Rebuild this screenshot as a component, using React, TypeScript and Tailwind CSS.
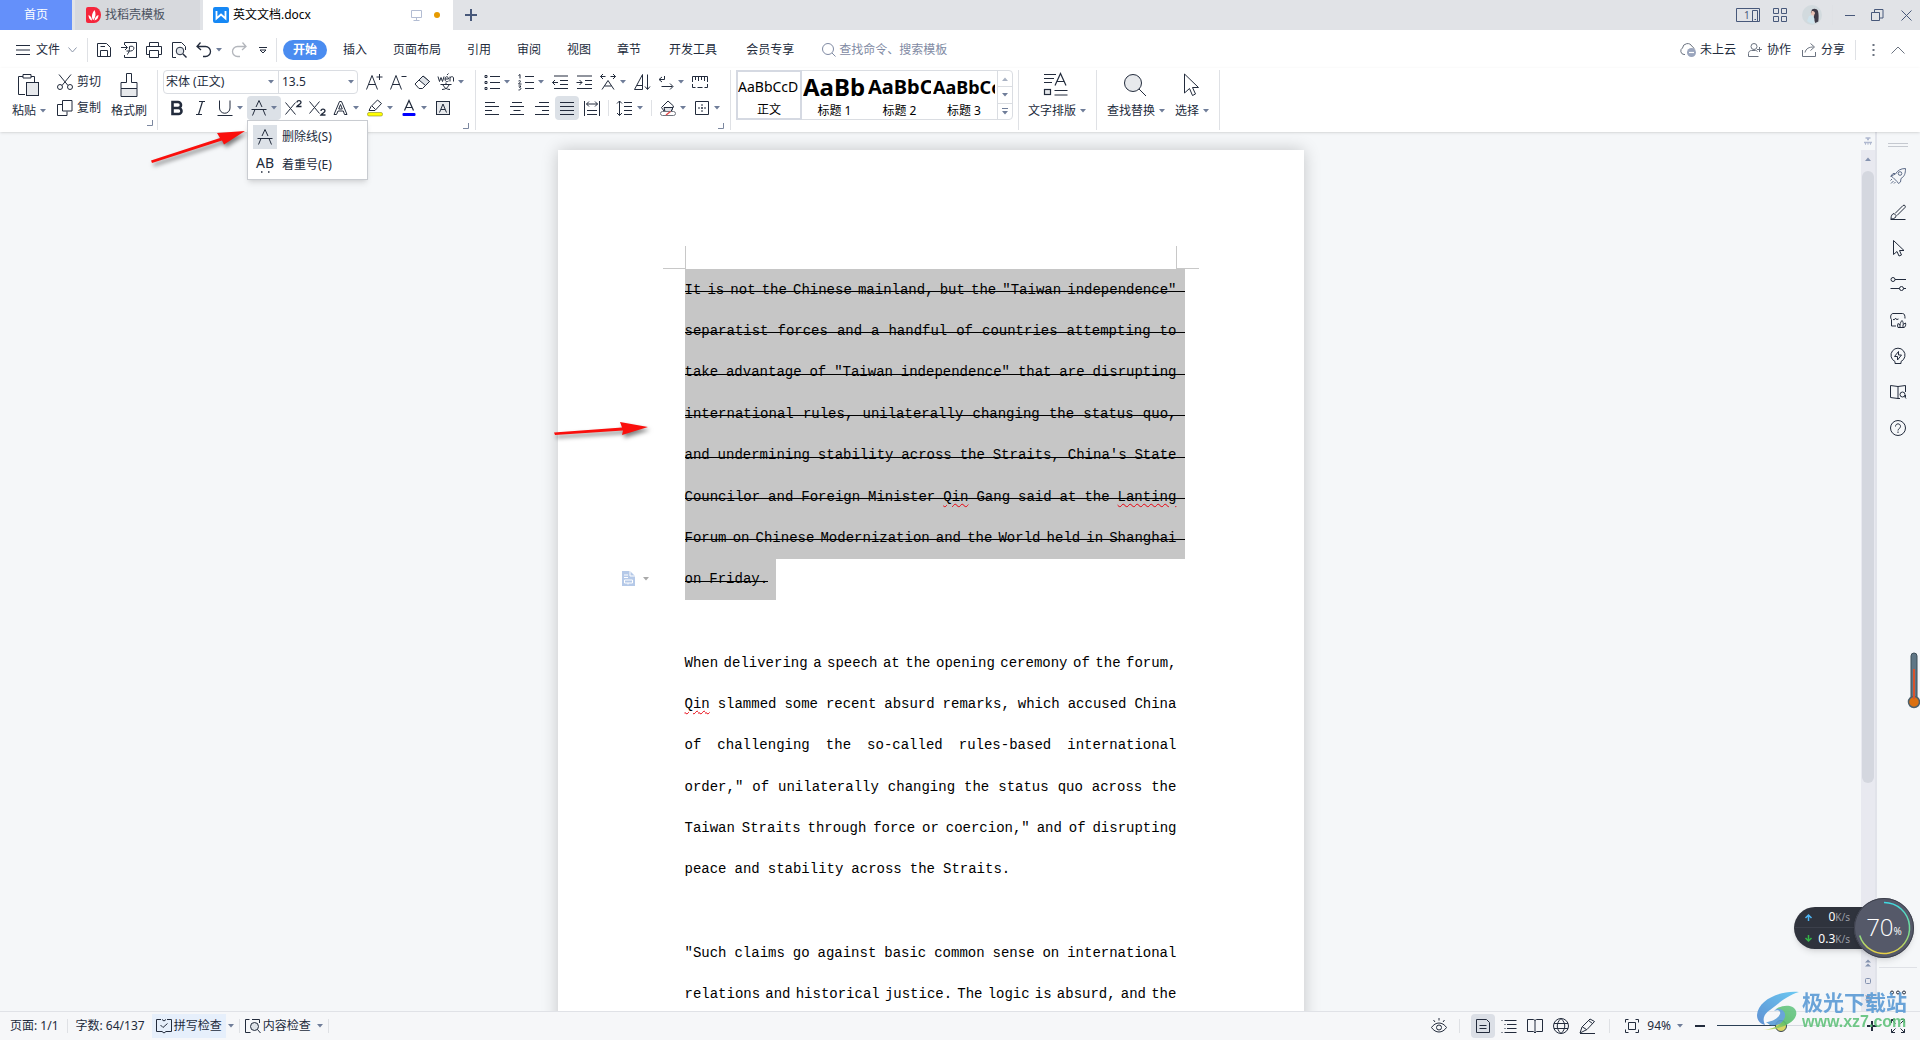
import type { ReactNode } from 'react';

const selectedLines = [
  'It is not the Chinese mainland, but the "Taiwan independence"',
  'separatist forces and a handful of countries attempting to',
  'take advantage of "Taiwan independence" that are disrupting',
  'international rules, unilaterally changing the status quo,',
  "and undermining stability across the Straits, China's State",
  'Councilor and Foreign Minister Qin Gang said at the Lanting',
  'Forum on Chinese Modernization and the World held in Shanghai',
  'on Friday.',
];

const secondLines = [
  'When delivering a speech at the opening ceremony of the forum,',
  'Qin slammed some recent absurd remarks, which accused China',
  'of challenging the so-called rules-based international',
  'order," of unilaterally changing the status quo across the',
  'Taiwan Straits through force or coercion," and of disrupting',
  'peace and stability across the Straits.',
];

const thirdLines = [
  '"Such claims go against basic common sense on international',
  'relations and historical justice. The logic is absurd, and the',
];

const misspelled = ['Qin', 'Lanting'];

const menuTabs = ['插入', '页面布局', '引用', '审阅', '视图', '章节'];
const extraTabs = ['开发工具', '会员专享'];

interface IconProps {
  children: ReactNode;
  w?: number;
  h?: number;
  className?: string;
}

function Icon({ children, w = 16, h = 16, className = '' }: IconProps) {
  return (
    <svg
      width={w}
      height={h}
      viewBox={`0 0 ${w} ${h}`}
      fill="none"
      stroke="currentColor"
      className={`shrink-0 overflow-visible ${className}`}
      aria-hidden="true"
    >
      {children}
    </svg>
  );
}

function Caret({ className = 'text-[#6f7d99]' }: { className?: string }) {
  return (
    <svg width="6" height="4" viewBox="0 0 6 4" className={`shrink-0 ${className}`} aria-hidden="true">
      <path d="M0 0h6L3 3.5z" fill="currentColor" />
    </svg>
  );
}

interface ToolProps {
  label: string;
  children: ReactNode;
  caret?: boolean;
  active?: boolean;
}

function Tool({ label, children, caret, active }: ToolProps) {
  return (
    <button
      type="button"
      aria-label={label}
      className={`flex h-6 shrink-0 items-center rounded-sm ${caret ? 'w-[34px] gap-1 pl-1' : 'w-6 justify-center'} ${active ? 'bg-[#dce1e7]' : ''}`}
    >
      {children}
      {caret && <Caret />}
    </button>
  );
}

function Divider({ className = 'h-6' }: { className?: string }) {
  return <div className={`w-px shrink-0 bg-[#dfe1e5] ${className}`} />;
}

function Launcher() {
  return (
    <button type="button" aria-label="更多设置" className="ml-auto flex text-[#7b879f]">
      <Icon w={6} h={6}><path d="M5.500 0v5.500H0" /></Icon>
    </button>
  );
}

function StrikeGlyph() {
  return (
    <Icon>
      <path d="M0.500 9.500h15M5 7l3-6.500L11 7M3.800 10l-2.300 5.500M12.200 10l2.300 5.500" />
    </Icon>
  );
}

function TitleBar() {
  return (
    <div className="flex h-[30px] shrink-0 items-center bg-[#e1e3e7] text-[#47587a]">
      <button type="button" className="h-full w-[72px] bg-[#6490fa] text-white">首页</button>
      <button type="button" className="ml-[3px] flex h-full w-[125px] items-center gap-1 bg-[#d7d9dd] pl-[11px] text-[#4a5160]">
        <svg width="15" height="16" viewBox="0 0 15 16" aria-hidden="true">
          <path d="M2 0h6a7 8 0 0 1 0 16H2a2 2 0 0 1-2-2V2a2 2 0 0 1 2-2z" fill="#f5263c" />
          <path d="M7 13C5 10 6 6 8.500 3c1.500 3 1.500 7-1 10z" fill="#fff" />
          <path d="M6 13.500C3.500 13 2.500 10.500 2.500 8c2.500 1 3.500 3 3.500 5.500zM8.500 13.500C9 10.500 10 9 12.500 8c0 3-1.500 5-4 5.500z" fill="#fff" />
        </svg>
        找稻壳模板
      </button>
      <div className="ml-[3px] flex h-full w-[250px] items-center bg-white pl-2.5 text-black">
        <svg width="16" height="16" viewBox="0 0 16 16" className="mr-1" aria-hidden="true">
          <rect width="16" height="16" rx="2" fill="#1688f5" />
          <path d="M3.500 4v7.500L8 7.500l4.500 4V4" stroke="#fff" strokeWidth="1.800" fill="none" />
        </svg>
        英文文档.docx
        <Icon w={11} h={11} className="ml-auto text-[#b3bdd3]">
          <path d="M0.500 0.500h10v7h-10zM5.500 7.500v3M2.500 10.500h6" />
        </Icon>
        <span className="mr-[13px] ml-3 size-1.5 rounded-full bg-[#e69a00]" />
      </div>
      <button type="button" aria-label="新建标签" className="ml-3">
        <Icon w={12} h={12}><path d="M6 0v12M0 6h12" strokeWidth="2" /></Icon>
      </button>
      <div className="mr-2 ml-auto flex items-center">
        <button type="button" aria-label="窗口布局" className="relative mr-[13px] flex">
          <Icon w={24} h={14}>
            <path d="M0.500 0.500h23v13h-23zM16.500 2.500h5v11h-5zM18.500 11.500h1.500" />
          </Icon>
          <span className="absolute top-0 left-2 text-[10px] leading-[14px] text-[#47587a]">1</span>
        </button>
        <button type="button" aria-label="应用" className="mr-[15px] flex">
          <Icon w={14} h={14}>
            <path d="M0.500 0.500h5v5h-5zM8.500 0.500h5v5h-5zM0.500 8.500h5v5h-5zM8.500 8.500h5v5h-5z" />
          </Icon>
        </button>
        <svg width="20" height="20" viewBox="0 0 20 20" aria-hidden="true">
          <circle cx="10" cy="10" r="10" fill="#d2dade" />
          <path d="M10 4.500c2-1.500 5-1 6 1.500.8 3 .8 7 .3 10.500l-3 1.500-2-5 1-3-3.500-2z" fill="#3d3a47" />
          <path d="M9.500 6.500c1.500-1 3.500 0 3.500 2l-1.500 2.500-2.500-1.500z" fill="#e9c4b7" />
          <path d="M7 11l4-.5 1.500 3.500-.5 4.500c-2.500 0-5-.5-7-2.500z" fill="#cfe3ec" />
        </svg>
        <Divider className="mr-2 ml-2.5 h-5 bg-[#c3c7ce]" />
        <button type="button" aria-label="最小化" className="mr-4 ml-1 flex"><Icon w={10} h={12}><path d="M0 6.500h10" /></Icon></button>
        <button type="button" aria-label="还原" className="mr-[17px] flex">
          <Icon w={13} h={12}><path d="M0.500 3.500h8v8h-8zM3.500 3.500v-3h8.500v8.500H8.500" /></Icon>
        </button>
        <button type="button" aria-label="关闭" className="flex"><Icon w={11} h={11}><path d="M0.500 0.500l10 10M10.500 0.500l-10 10" /></Icon></button>
      </div>
    </div>
  );
}

function MenuBar() {
  return (
    <div className="flex h-[38px] shrink-0 items-center bg-white pt-0.5">
      <button type="button" className="ml-4 flex items-center">
        <Icon w={14} h={10}><path d="M0 0.500h14M0 5h14M0 9.500h14" /></Icon>
        <span className="mr-2 ml-1.5">文件</span>
        <Icon w={9} h={6} className="text-[#8e98ab]"><path d="M0.500 0.500l4 4.500 4-4.500" /></Icon>
      </button>
      <Divider className="mr-2 ml-2.5 h-6" />
      <div className="flex items-center gap-[9px]">
        <button type="button" aria-label="保存"><Icon><path d="M1.500 1.500h9l4 4v9h-13zM4.500 14.500v-6h7v6M4.500 4.500h4.500" /></Icon></button>
        <button type="button" aria-label="输出为PDF"><Icon><path d="M3.500 3V0.500h12v15h-12V13M0 5.500h6M4 3l2.500 2.500L4 8M6 12.500c2-1 2.500-4 2.500-8 4-1 5 1 4 3s-4 1.500-7 1.500" /></Icon></button>
        <button type="button" aria-label="打印"><Icon><path d="M3.500 5V0.500h9V5M3.500 12.500h-3v-8h15v8h-3M3.500 8.500h9v7h-9z" /></Icon></button>
        <button type="button" aria-label="打印预览">
          <Icon><path d="M5 15.500H1.500v-15h9l4 4V8" /><circle cx="9" cy="9" r="3.800" fill="#e1e5ea" /><path d="M12 12l3.500 3.500" strokeWidth="1.400" /></Icon>
        </button>
        <button type="button" aria-label="撤销" className="flex items-center gap-1">
          <Icon><path d="M4.500 0.500l-3.500 4 4 3.500M1.500 4.500h8a4.500 4.500 0 0 1 0 10H7" strokeWidth="1.300" /></Icon>
          <Caret />
        </button>
        <button type="button" aria-label="恢复" className="text-[#b3b6bc]"><Icon><path d="M11.500 0.500l3.500 4-4 3.500M14.500 4.500h-8a4.500 4.500 0 0 0 0 10H9" strokeWidth="1.300" /></Icon></button>
      </div>
      <button type="button" aria-label="自定义快速访问" className="ml-3"><Icon w={8} h={7}><path d="M0 0.500h8M1 3l3 3 3-3z" /></Icon></button>
      <Divider className="mr-1.5 ml-[9px] h-6" />
      <nav className="flex items-center">
        <button type="button" className="h-5 w-11 rounded-full bg-[#4a8cf0] font-bold text-white">开始</button>
        <div className="ml-4 flex gap-[26px]">
          {menuTabs.map((tab) => (
            <button type="button" key={tab}>{tab}</button>
          ))}
        </div>
        <div className="ml-7 flex gap-[29px]">
          {extraTabs.map((tab) => (
            <button type="button" key={tab}>{tab}</button>
          ))}
        </div>
      </nav>
      <label className="ml-7 flex items-center gap-[3px] text-[#7f8aa3]">
        <Icon w={14} h={14}><circle cx="6" cy="6" r="5.500" /><path d="M10 10l3.500 3.500" /></Icon>
        <input type="text" placeholder="查找命令、搜索模板" aria-label="查找命令" className="w-32 bg-transparent placeholder:text-[#7f8aa3]" />
      </label>
      <div className="mr-[15px] ml-auto flex items-center">
        <button type="button" className="flex items-center gap-1">
          <Icon className="text-[#6b7380]">
            <path d="M5 12.500H4A3.500 3.500 0 0 1 2.500 6a5 5 0 0 1 9.500-1.500c1.500.5 2 1.500 2 2.500" />
            <circle cx="11.500" cy="10.500" r="4.500" fill="#9aa5bd" stroke="none" />
            <path d="M9 10.500h5" stroke="#fff" strokeWidth="1.200" />
          </Icon>
          未上云
        </button>
        <button type="button" className="ml-3 flex items-center gap-[5px]">
          <Icon w={14} h={14} className="text-[#6b7380]"><circle cx="6" cy="3.500" r="3" /><path d="M10.500 13.500h-10v-3c0-2 1.500-3 3-3h4c1 0 1.500.5 2 1M11.500 4v5M9 6.500h5" /></Icon>
          协作
        </button>
        <button type="button" className="ml-[11px] flex items-center gap-[5px]">
          <Icon w={14} h={14} className="text-[#6b7380]"><path d="M0.500 7v6.500h13V9M3 9.500C4 5.500 7 4 11.500 4M8.500 0.500L12.500 4 8.500 7.500" /></Icon>
          分享
        </button>
        <Divider className="mr-4 ml-2.5 h-5" />
        <button type="button" aria-label="更多" className="mr-4"><Icon w={3} h={12} className="text-[#6b7380]"><path d="M0.500 1h2M0.500 6h2M0.500 11h2" strokeWidth="2" /></Icon></button>
        <button type="button" aria-label="折叠功能区"><Icon w={14} h={8} className="text-[#6b7380]"><path d="M0.500 7.500L7 1l6.500 6.500" /></Icon></button>
      </div>
    </div>
  );
}

function StrikeMenu() {
  return (
    <div className="absolute top-6 left-0 z-20 flex h-[60px] w-[121px] flex-col gap-1 border border-[#c9ccd1] bg-white px-[3px] py-1 shadow-md">
      <button type="button" className="flex items-center gap-[5px] pl-0.5">
        <span className="flex size-6 items-center justify-center bg-[#dce1e7]"><StrikeGlyph /></span>
        删除线(S)
      </button>
      <button type="button" className="flex items-center gap-[5px] pl-0.5">
        <span className="flex size-6 flex-col items-center justify-center">
          <span className="text-sm leading-3">AB</span>
          <Icon w={12} h={4}><path d="M2 3h1.500M9 3h1.500" strokeWidth="1.500" /></Icon>
        </span>
        着重号(E)
      </button>
    </div>
  );
}

function FontGroup() {
  return (
    <div className="flex w-[317px] shrink-0 flex-col gap-0.5 pr-1.5 pl-[5px]">
      <div className="flex h-6 items-center">
        <div className="flex h-6 rounded-sm border border-[#dadde2]">
          <label className="flex w-[115px] items-center border-r border-[#dadde2] pr-1">
            <select aria-label="字体" className="min-w-0 flex-1 appearance-none bg-transparent pl-0.5">
              <option>宋体 (正文)</option>
            </select>
            <Caret />
          </label>
          <label className="flex w-[78px] items-center pr-[3px]">
            <select aria-label="字号" className="min-w-0 flex-1 appearance-none bg-transparent pl-[3px]">
              <option>13.5</option>
            </select>
            <Caret />
          </label>
        </div>
        <div className="ml-1 flex">
          <Tool label="增大字号"><Icon><path d="M0.500 15.500l5.500-14 5.500 14M2.500 10.500h7M13.500 0v6M10.500 3h6" /></Icon></Tool>
          <Tool label="减小字号"><Icon><path d="M0.500 15.500l5.500-14 5.500 14M2.500 10.500h7M11.500 2.500h5" /></Icon></Tool>
          <Tool label="清除格式"><Icon><path d="M1 10l8-8 6.500 5.500-7 7H5z" /><path d="M5 6L9 2l6.500 5.500-4 4z" fill="#dfe3e8" /></Icon></Tool>
          <Tool label="拼音指南" caret>
            <Icon>
              <path d="M0 2.500l1.500 5 1.500-4 1.500 4 1.500-5M7 5h3.500c0-3-3.500-3-3.500 0s2.500 3 3.500 2M12 7.500v-5M12 4c1-2 3.500-1.500 3.500 0v3.500M9 1l1.500-1.500M2.500 10.500h11M8 8.500v2M5 11c1 2.500 3.500 4.500 7 4.500M11 11c-1 2.500-3.500 4.500-7 4.500" />
            </Icon>
          </Tool>
        </div>
      </div>
      <div className="flex h-6 items-center pl-0.5">
        <Tool label="加粗"><Icon><path d="M3.500 2h5.500a3 3 0 0 1 0 6H3.500zM3.500 8h6a3 3 0 0 1 0 6h-6z" strokeWidth="2.600" /></Icon></Tool>
        <Tool label="倾斜"><Icon><path d="M6 1.500h6M3 14.500h6M9.500 1.500l-4 13" strokeWidth="1.200" /></Icon></Tool>
        <Tool label="下划线" caret><Icon><path d="M2.500 0.500v7.500a5 5 0 0 0 10.500 0V0.500M0.500 15.500h15" /></Icon></Tool>
        <div className="relative">
          <Tool label="删除线" caret active><StrikeGlyph /></Tool>
          <StrikeMenu />
        </div>
        <Tool label="上标"><Icon><path d="M0.500 2.500l10 12M10.500 2.500l-10 12" /><path d="M12 2.500c0-2.500 4-2.500 4 0 0 1.500-2.500 2-4 4h4.500" strokeWidth="1.300" /></Icon></Tool>
        <Tool label="下标"><Icon><path d="M0.500 1.500l10 12M10.500 1.500l-10 12" /><path d="M12 11c0-2.500 4-2.500 4 0 0 1.500-2.500 2-4 4h4.500" strokeWidth="1.300" /></Icon></Tool>
        <Tool label="文字效果" caret><Icon><path d="M1 14.500L6.500 1.500h2l5.500 13h-2.500l-1.200-3.500H5l-1.500 3.500zM5.700 9h3.600L7.500 4.500z" /></Icon></Tool>
        <Tool label="突出显示" caret>
          <Icon><path d="M2 10.500l2-4L10.500 0l4 3.500L8 10.500zM5 6l3.500 3.500" /><rect x="0.500" y="12.500" width="15" height="3.500" rx="1.500" fill="#ffff00" stroke="#8c8c2a" strokeWidth="0.600" /></Icon>
        </Tool>
        <Tool label="字体颜色" caret>
          <Icon><path d="M3.500 10.500L8 0.500l4.500 10M5 7.500h6" strokeWidth="1.200" /><rect x="1.500" y="13" width="13" height="3" rx="1" fill="#0000ff" stroke="none" /></Icon>
        </Tool>
        <Tool label="字符底纹"><Icon><rect x="1.500" y="1.500" width="13" height="13" fill="#e7e9ec" /><path d="M4.500 12.500L8 4l3.500 8.500M6 9.500h4" /></Icon></Tool>
      </div>
      <div className="flex pt-px"><Launcher /></div>
    </div>
  );
}

function ParagraphGroup() {
  return (
    <div className="flex w-[254px] shrink-0 flex-col gap-0.5 pr-1.5 pl-1">
      <div className="flex h-6 items-center">
        <Tool label="项目符号" caret><Icon><path d="M6 2.500h10M6 8.500h10M6 14.500h10" strokeWidth="1.200" /><path d="M1 1.500h2v2H1zM1 7.500h2v2H1zM1 13.500h2v2H1z" /></Icon></Tool>
        <Tool label="编号" caret><Icon><path d="M7 2.500h9M7 8.500h9M7 14.500h9" strokeWidth="1.200" /><path d="M0.500 1.500l1.500-1v4M0.500 7c2-1 3 0 0 3h3M0.500 12h2.500l-1.500 1.500c2 0 2 2.500-1 2.500" /></Icon></Tool>
        <Tool label="减少缩进"><Icon><path d="M2 2h14M8 6.500h8M8 10.500h8M2 14.500h14" strokeWidth="1.200" /><path d="M0.500 8.500H6M3 6L0.500 8.500 3 11" /></Icon></Tool>
        <Tool label="增加缩进"><Icon><path d="M1 2h15M9 6.500h7M9 10.500h7M1 14.500h15" strokeWidth="1.200" /><path d="M0.500 8.500H6M3.500 6L6 8.500 3.500 11" /></Icon></Tool>
        <Tool label="中文版式" caret><Icon><path d="M0.500 2.500h5M3 0L0.500 2.500 3 5M15.500 2.500h-5M13 0l2.500 2.500L13 5M2 15.500l6-9 6 9M4.500 12h7" /></Icon></Tool>
        <Tool label="排序"><Icon><path d="M0.500 15.500h8V0.500zM3 11.500h5.500M13.500 0.500v14.500M11 12.500l2.500 3 2.500-3" /></Icon></Tool>
        <Tool label="显示编辑标记" caret><Icon><path d="M1.500 5.500h5V2M4 3l-3 2.500L4 8M3.500 12.500h11M12 9.500l3 3-3 3" /></Icon></Tool>
        <Tool label="制表位"><Icon><path d="M0.500 8V2.500h15V8M3.500 2.500V6M6.500 2.500V7M9.500 2.500V6M12.500 2.500V7M0.500 10v3.500h3M15.500 10v3.500h-3M5.500 13.500h5" /></Icon></Tool>
      </div>
      <div className="flex h-6 items-center">
        <div className="flex gap-px">
          <Tool label="左对齐"><Icon><path d="M1 2.500h10M1 6.500h14M1 10.500h7M1 14.500h14" strokeWidth="1.200" /></Icon></Tool>
          <Tool label="居中对齐"><Icon><path d="M3 2.500h10M1 6.500h14M4.500 10.500h7M1 14.500h14" strokeWidth="1.200" /></Icon></Tool>
          <Tool label="右对齐"><Icon><path d="M5 2.500h10M1 6.500h14M8 10.500h7M1 14.500h14" strokeWidth="1.200" /></Icon></Tool>
          <Tool label="两端对齐" active><Icon><path d="M1 2.500h14M1 6.500h14M1 10.500h14M1 14.500h14" strokeWidth="1.200" /></Icon></Tool>
          <Tool label="分散对齐"><Icon><path d="M0.500 1v15M15.500 1v15M2.500 4h11M5 1.500L2.500 4 5 6.500M11 1.500L13.500 4 11 6.500M3 10.500h10M3 14.500h10" /></Icon></Tool>
        </div>
        <Divider className="mx-1 h-4" />
        <Tool label="行距" caret><Icon><path d="M2.500 1v14.500M0 3.500L2.500 1 5 3.500M0 13l2.500 2.500L5 13M7 2.500h8M7 6.500h8M7 10.500h8M7 14.500h8" /></Icon></Tool>
        <Divider className="mx-1 h-4" />
        <Tool label="底纹颜色" caret><Icon><path d="M1.500 7.500L8 1l5.500 5-2 5H4z" /><path d="M4 7.500h9l-2 4H5z" fill="#dfe3e8" /><rect x="0.500" y="11.500" width="15" height="4" rx="2" fill="#fff" stroke="#70757f" /><path d="M6 15l4.500-3.500" stroke="#e34c4c" strokeWidth="1.500" /></Icon></Tool>
        <Tool label="边框" caret><Icon><path d="M1.500 1.500h13v13h-13z" /><path d="M8 4v8M4 8h8" strokeDasharray="2 1" /></Icon></Tool>
      </div>
      <div className="flex pt-px"><Launcher /></div>
    </div>
  );
}

function StyleGallery() {
  return (
    <div className="ml-[5px] flex h-[50px] w-[277px] shrink-0 rounded-sm border border-[#dadde2] text-black">
      <button type="button" className="-m-px flex w-[66px] flex-col items-center border-2 border-[#d5d9e2]">
        <span className="flex h-8 w-full items-center overflow-hidden text-sm whitespace-nowrap">AaBbCcD</span>
        <span className="leading-4">正文</span>
      </button>
      <button type="button" className="ml-0.5 flex w-[63px] flex-col items-center">
        <span className="flex h-8 w-full items-center overflow-hidden text-2xl font-bold whitespace-nowrap">AaBb</span>
        <span className="leading-4">标题 1</span>
      </button>
      <button type="button" className="ml-0.5 flex w-[63px] flex-col items-center">
        <span className="flex h-8 w-full items-center overflow-hidden text-xl font-bold whitespace-nowrap">AaBbC</span>
        <span className="leading-4">标题 2</span>
      </button>
      <button type="button" className="ml-0.5 flex w-[62px] flex-col items-center">
        <span className="flex h-8 w-full items-center overflow-hidden text-lg font-bold whitespace-nowrap">AaBbCc</span>
        <span className="leading-4">标题 3</span>
      </button>
      <div className="ml-auto flex w-[15px] flex-col divide-y divide-[#dadde2] border-l border-[#dadde2]">
        <button type="button" aria-label="上一行" className="flex flex-1 items-center justify-center"><Caret className="rotate-180 text-[#a9b2c3]" /></button>
        <button type="button" aria-label="下一行" className="flex flex-1 items-center justify-center"><Caret /></button>
        <button type="button" aria-label="更多样式" className="flex flex-1 flex-col items-center justify-center gap-0.5">
          <span className="h-px w-1.5 bg-[#6f7d99]" />
          <Caret />
        </button>
      </div>
    </div>
  );
}

function BigButton({ label, children, className = '' }: { label: string; children: ReactNode; className?: string }) {
  return (
    <button type="button" className={`flex shrink-0 flex-col items-center ${className}`}>
      <span className="mt-[3px] flex h-6 items-center pr-[3px]">{children}</span>
      <span className="mt-1 flex items-center gap-1 leading-5">{label}<Caret /></span>
    </button>
  );
}

function Ribbon() {
  return (
    <div className="relative z-10 flex h-16 shrink-0 bg-white pt-0.5 shadow-sm">
      <div className="flex w-[157px] shrink-0">
        <BigButton label="粘贴" className="ml-3">
          <Icon w={22} h={24}><path d="M6 3.500H1.500v18H8M14 3.500h3.500V9M6 1.500h8v3.500H6z" /><rect x="9.500" y="9.500" width="12" height="13" fill="#e7e9ec" /></Icon>
        </BigButton>
        <div className="ml-[11px] flex flex-col gap-0.5">
          <button type="button" className="flex h-6 items-center gap-1">
            <Icon><path d="M2 0.500l9 11M14 0.500L5 11.500" /><circle cx="3" cy="13" r="2.500" /><circle cx="13" cy="13" r="2.500" /></Icon>
            剪切
          </button>
          <button type="button" className="flex h-6 items-center gap-1">
            <Icon><path d="M5.500 0.500h9.500v10.500H5.500zM5 4.500H0.500v11H10v-4" /></Icon>
            复制
          </button>
        </div>
        <button type="button" className="ml-2.5 flex flex-col items-center">
          <span className="mt-[3px] flex h-6 items-center"><Icon w={18} h={24}><path d="M6.500 0.500h5v9h5.500v6H1v-6h5.500z" /><path d="M1 15.500h16v8H1z" fill="#e7e9ec" /></Icon></span>
          <span className="mt-1 leading-5">格式刷</span>
        </button>
        <div className="flex flex-1 items-end pr-[5px] pb-1.5"><Launcher /></div>
      </div>
      <Divider className="h-[60px]" />
      <FontGroup />
      <Divider className="h-[60px]" />
      <ParagraphGroup />
      <Divider className="h-[60px]" />
      <StyleGallery />
      <Divider className="ml-[5px] h-[60px]" />
      <BigButton label="文字排版" className="ml-[9px]">
        <Icon w={24} h={24}><path d="M0 1.500h12M0 5.500h10M0 9.500h8M11 12.500L16.500 0.500 22 12.500M13 8.500h7M10.500 17.500h13M10.500 22h13" strokeWidth="1.200" /><rect x="0.500" y="16.500" width="6" height="5" fill="#e7e9ec" strokeWidth="1.200" /></Icon>
      </BigButton>
      <Divider className="ml-2.5 h-[60px]" />
      <BigButton label="查找替换" className="ml-2.5">
        <Icon w={22} h={24}><circle cx="9" cy="10" r="8.500" fill="#e7e9ec" /><path d="M15 16l7 7" /></Icon>
      </BigButton>
      <BigButton label="选择" className="ml-2.5">
        <Icon w={16} h={24}><path d="M1.500 1v19l5-4.500 3 7 3-1.500-3-6.500h6z" /></Icon>
      </BigButton>
      <Divider className="ml-2.5 h-[60px]" />
    </div>
  );
}

function Line({ text, struck, last }: { text: string; struck?: boolean; last?: boolean }) {
  return (
    <p
      className={`flex items-center ${last ? 'gap-2' : 'justify-between'} ${
        struck
          ? `relative bg-[#c6c6c6] pr-2 after:absolute after:left-0 after:top-[22px] after:h-px after:bg-black ${last ? 'w-max after:right-2' : '-mr-2 after:right-0'}`
          : ''
      }`}
    >
      {text.split(' ').map((word, i) => (
        <span
          key={i}
          className={misspelled.includes(word) ? 'underline decoration-red-600 decoration-wavy decoration-1 underline-offset-2' : ''}
        >
          {word}
        </span>
      ))}
    </p>
  );
}

function DocumentPage() {
  return (
    <div className="mx-auto mt-[18px] h-[1055px] w-[746px] bg-white px-[127px] pt-24 font-[Liberation_Mono,monospace] text-sm text-black shadow-[0_0_16px_rgba(0,0,0,0.2)]">
      <div className="-mx-[22px] flex h-[23px] justify-between">
        <div className="w-[23px] border-r border-b border-[#c8c8c8]" />
        <div className="w-[23px] border-b border-l border-[#c8c8c8]" />
      </div>
      <div className="relative grid h-[331px] grid-rows-8">
        {selectedLines.map((text, i) => (
          <Line key={text} text={text} struck last={i === 7} />
        ))}
        <button type="button" aria-label="段落布局" className="absolute bottom-3.5 -left-[63px] flex items-center gap-2">
          <svg width="13" height="15" viewBox="0 0 13 15" aria-hidden="true">
            <path d="M0 0h8l5 5v10H0z" fill="#b5c9e8" />
            <path d="M8 0v5h5M2 4h4M2 6.500h4M2.500 9h8v3h-8zM6 12v1.500" stroke="#fff" fill="none" />
          </svg>
          <Caret className="text-[#a9a9a9]" />
        </button>
      </div>
      <div className="mt-[42px] grid h-[248px] grid-rows-6">
        {secondLines.map((text, i) => (
          <Line key={text} text={text} last={i === 5} />
        ))}
      </div>
      <div className="mt-[42px] grid h-[83px] grid-rows-2">
        {thirdLines.map((text) => (
          <Line key={text} text={text} />
        ))}
      </div>
    </div>
  );
}

function ScrollBar() {
  return (
    <div className="flex w-4 shrink-0 flex-col items-center border-r-2 border-[#e1e3ea] text-[#8593b0]">
      <Icon w={8} h={8} className="my-[5px] text-[#b0b9d0]"><path d="M1.500 1h5M3 2.500h2M0 5.500h8M1 7h1M3.500 7h1M6 7h1" strokeWidth="1.500" /></Icon>
      <div className="flex w-full flex-1 flex-col items-center bg-[#e8e9f0] pt-[7px]">
        <Caret className="rotate-180" />
        <div className="mt-2.5 h-[612px] w-3 rounded-full bg-[#d4d7df]" />
        <div className="mt-auto mb-2 flex flex-col items-center gap-[11px]">
          <Icon w={6} h={8}><path d="M0 3.500h6L3 0.500zM0 7.500h6L3 4.500z" fill="currentColor" stroke="none" /></Icon>
          <Icon w={6} h={6}><rect x="0.500" y="0.500" width="5" height="5" rx="1" /></Icon>
          <Icon w={6} h={8}><path d="M0 0.500h6L3 3.500zM0 4.500h6L3 7.500z" fill="currentColor" stroke="none" /></Icon>
        </div>
      </div>
    </div>
  );
}

function SideBar() {
  return (
    <aside className="flex w-[43px] shrink-0 flex-col items-center pr-0.5">
      <div className="mt-[11px] h-1 w-5 border-y border-[#c5c9d0]" />
      <div className="mt-[21px] flex flex-col gap-5">
        <button type="button" aria-label="快捷" className="text-[#5d6b88]">
          <Icon><path d="M15.500 0.500c-5 0-8 2-10 5.500L1 8l2 1.500 4 4L8.500 15.500 10.500 14l.5-3.500c3.500-2 4.500-5 4.500-10zM5 5.500H3L0.500 8.500M1 15.500l2.500-2.500M0.500 12.500L2 11M4 15.500L5.500 14" /><circle cx="10" cy="5.500" r="1.800" /></Icon>
        </button>
        <button type="button" aria-label="样式"><Icon><path d="M0.500 15.500h15M1 15c0-3.500 1-5 3-5.500l2 2c0 2-1.500 3.500-5 3.500zM5 9.500L13 1.500c1.500-1 3 .5 2 2L7 11.500" /></Icon></button>
        <button type="button" aria-label="选择窗格"><Icon><path d="M3.500 0.500v14l3.500-3 2 4.500 2.500-1-2-4.500H14z" /></Icon></button>
        <button type="button" aria-label="属性"><Icon><circle cx="3" cy="3.500" r="2" /><path d="M5 3.500h11M0.500 12.500h9M13.500 12.500H16" /><circle cx="11.500" cy="12.500" r="2" /></Icon></button>
        <button type="button" aria-label="资源"><Icon><path d="M1.500 7.500v6.500H6M1.500 7.500C0 6 .5 1.500 3 1.500h9.500c2 0 2.500 2 2.500 5M3 7.500c2 1 2.500-1.500 2.500-1.500s.5 2.500 3 1" /><path d="M8 15.500c-1-2 0-4 0-4l2 1.500c0-2 1.500-4 2-4.500 1 1 1.500 3 1 4l2.500-1.500c.5 2 0 4-1.500 4.500zM10 13v2.500M13 13v2.500" /></Icon></button>
        <button type="button" aria-label="推荐"><Icon><path d="M5 13.500A7 7 0 1 1 11 13.500v2H5zM8.500 3.500L4.500 8.500h3v3.500l4-5h-3z" /></Icon></button>
        <button type="button" aria-label="词典"><Icon><path d="M8 2.500L0.500 1.500v12l7.500 1V2.500l7.500-1V8M8 14.500h2M15.500 13v-2" /><circle cx="12.500" cy="10.500" r="2.500" /><path d="M14.500 12.500l1.500 2" /></Icon></button>
        <button type="button" aria-label="帮助"><Icon><circle cx="8" cy="8" r="7.500" /><path d="M5.500 6.500c0-3.500 5-3.500 5 0 0 2-2.500 2-2.500 4M8 11.500v1.500" /></Icon></button>
      </div>
      <div className="mt-auto h-px w-[38px] bg-[#dfe1e6]" />
      <button type="button" aria-label="更多工具" className="mt-[22px] mb-4"><Icon w={16} h={5}><circle cx="2" cy="2.500" r="1.500" /><circle cx="8" cy="2.500" r="1.500" /><circle cx="14" cy="2.500" r="1.500" /></Icon></button>
    </aside>
  );
}

function StatusBar() {
  return (
    <footer className="flex h-[29px] shrink-0 items-center border-t border-[#e0e2e7] bg-[#f6f7f9] pb-px">
      <button type="button" className="ml-2.5">页面: 1/1</button>
      <Divider className="mx-2 h-3.5" />
      <button type="button">字数: 64/137</button>
      <button type="button" className="ml-[7px] flex h-6 items-center gap-0.5 bg-[#e6effb] px-1">
        <Icon><path d="M5 1.500H0.500v12H6l2 1.500 2-1.500h5.500v-12H11M6 1.500l2 1.500 2-1.500M4.500 7l2.500 2.500L11.500 5.500" /></Icon>
        拼写检查
      </button>
      <button type="button" aria-label="拼写检查选项" className="ml-0.5"><Caret /></button>
      <Divider className="mx-[5px] h-3.5" />
      <button type="button" className="flex items-center gap-0.5">
        <Icon><path d="M4.500 1.500h-4v13h5M7 1.500h7.500V5" /><circle cx="9.500" cy="8.500" r="4" fill="#dfe3e8" /><path d="M12.500 11.500l3 3.500" /></Icon>
        内容检查
        <span className="ml-1"><Caret /></span>
      </button>
      <Divider className="ml-[5px] h-3.5" />
      <div className="mr-[15px] ml-auto flex items-center">
        <button type="button" aria-label="护眼模式"><Icon><path d="M0.500 9.500c4-6 11-6 15 0-4 6-11 6-15 0zM8 0v2.500M2.500 2L4 4M13.500 2L12 4" /><circle cx="8" cy="9.500" r="2.500" /></Icon></button>
        <Divider className="mr-[11px] ml-3 h-3.5" />
        <button type="button" aria-label="页面视图" className="flex h-6 w-6 items-center justify-center rounded-sm bg-[#dbdfe6]"><Icon w={14} h={14}><path d="M0.500 0.500h10l3 3v10h-13zM3.500 6.500h7M3.500 9.500h7" /></Icon></button>
        <div className="ml-1.5 flex items-center gap-2.5">
          <button type="button" aria-label="大纲"><Icon><path d="M0.500 2.500h1M3.500 2.500h12M3.500 6.500h1M6 6.500h9.500M3.500 10.500h1M6 10.500h9.500M0.500 14.500h1M3.500 14.500h12" /></Icon></button>
          <button type="button" aria-label="阅读版式"><Icon><path d="M8 2.500v12M0.500 1.500H6.500L8 2.500 9.500 1.500h6v12h-6L8 15l-1.500-1.500h-6z" /></Icon></button>
          <button type="button" aria-label="Web版式"><Icon><circle cx="8" cy="8" r="7.500" /><path d="M1 5.500h14M1 10.500h14M8 0.500C3 5 3 11 8 15.500M8 0.500c5 4.500 5 10.500 0 15" /></Icon></button>
          <button type="button" aria-label="写作模式"><Icon><path d="M1 15.500h15M1 15l2-6L11 1l4.500 2.500L8 11.500zM3.500 9l4 2.500M9.500 2.500l4 3" /></Icon></button>
        </div>
        <Divider className="mr-[15px] ml-3.5 h-3.5" />
        <button type="button" aria-label="适应页面"><Icon w={14} h={14}><path d="M0.500 3.500v-3h3M10.500 0.500h3v3M13.500 10.500v3h-3M3.500 13.500h-3v-3M3.500 3.500h7v7h-7z" /></Icon></button>
        <button type="button" className="ml-2 flex items-center gap-1.5">94%<Caret /></button>
        <button type="button" aria-label="缩小" className="ml-3"><Icon w={10} h={10}><path d="M0 5h10" strokeWidth="2" /></Icon></button>
        <input
          type="range"
          aria-label="缩放"
          defaultValue={50}
          className="mr-[22px] ml-3 h-3 w-32 appearance-none bg-transparent [&::-webkit-slider-runnable-track]:h-px [&::-webkit-slider-runnable-track]:bg-linear-to-r [&::-webkit-slider-runnable-track]:from-[#2a3f55] [&::-webkit-slider-runnable-track]:from-50% [&::-webkit-slider-runnable-track]:to-[#d5d9e0] [&::-webkit-slider-runnable-track]:to-50% [&::-webkit-slider-thumb]:-mt-[5px] [&::-webkit-slider-thumb]:size-3 [&::-webkit-slider-thumb]:appearance-none [&::-webkit-slider-thumb]:rounded-full [&::-webkit-slider-thumb]:border [&::-webkit-slider-thumb]:border-[#3a4658] [&::-webkit-slider-thumb]:bg-[#d8d565]"
        />
        <button type="button" aria-label="放大" className="mr-3.5"><Icon w={10} h={10}><path d="M0 5h10M5 0v10" strokeWidth="2" /></Icon></button>
        <button type="button" aria-label="全屏"><Icon w={14} h={14}><path d="M0.500 4v-3.500H4M10 0.500h3.500V4M13.500 10v3.500H10M4 13.500H0.500V10M0.500 0.500l4 4M13.500 0.500l-4 4M0.500 13.500l4-4M13.500 13.500l-4-4" /></Icon></button>
      </div>
    </footer>
  );
}

function Arrow({ className, tilt }: { className: string; tilt: 'steep' | 'flat' }) {
  return (
    <svg width="100" height="40" viewBox="0 0 100 40" className={`absolute z-20 overflow-visible drop-shadow-[2px_3px_2px_rgba(0,0,0,0.5)] ${className}`} aria-hidden="true">
      {tilt === 'steep' ? (
        <path d="M1 29.500L70 7l-3-5L95 0 74 13.500 72 9.500 2 32z" fill="#fa0f0c" />
      ) : (
        <path d="M0 15.500L68 10.500l-2-5.500 28 5-26 8 1-4.500L1 18z" fill="#fa0f0c" />
      )}
    </svg>
  );
}

function NetworkWidget() {
  return (
    <div className="absolute right-1.5 bottom-[82px] z-30 flex items-center">
      <div className="-mr-4 flex h-[42px] w-[76px] flex-col rounded-l-full bg-[#2f333d] text-white shadow-md">
        <div className="flex h-[21px] items-center border-b border-[#3c404b] pl-[11px]">
          <Icon w={7} h={7} className="text-[#4db5f5]"><path d="M3.500 7V1M0.500 4l3-3 3 3" strokeWidth="1.500" /></Icon>
          <span className="ml-auto pr-5 text-xs">0<span className="text-[10px] text-[#9a9da5]">K/s</span></span>
        </div>
        <div className="flex h-[21px] items-center pl-[11px]">
          <Icon w={7} h={7} className="text-[#34b648]"><path d="M3.500 0v6M0.500 3l3 3 3-3" strokeWidth="1.500" /></Icon>
          <span className="ml-auto pr-5 text-xs">0.3<span className="text-[10px] text-[#9a9da5]">K/s</span></span>
        </div>
      </div>
      <div className="relative flex size-[60px] items-center justify-center rounded-full bg-[#555969] pb-0.5 font-[Open_Sans,sans-serif] text-white shadow-md">
        <svg width="60" height="60" viewBox="0 0 60 60" className="absolute inset-0" fill="none" aria-hidden="true">
          <defs>
            <linearGradient id="ring" x1="0" y1="0" x2="0" y2="1">
              <stop offset="0" stopColor="#3fd8e0" />
              <stop offset="0.600" stopColor="#7ddf8c" />
              <stop offset="1" stopColor="#e8cf45" />
            </linearGradient>
          </defs>
          <circle cx="30" cy="30" r="29.500" stroke="#3d404c" />
          <path d="M30 4.500A25.500 25.500 0 1 1 5.700 37.500" stroke="url(#ring)" strokeWidth="1.500" />
        </svg>
        <span className="text-2xl font-light">70</span>
        <span className="mt-2.5 text-[10px]">%</span>
      </div>
    </div>
  );
}

function Watermark() {
  return (
    <div className="pointer-events-none absolute right-3 bottom-2 z-30 flex items-center opacity-90">
      <svg width="46" height="40" viewBox="0 0 46 40" aria-hidden="true">
        <defs>
          <linearGradient id="swirl" x1="0" y1="1" x2="1" y2="0">
            <stop offset="0" stopColor="#4f86cf" />
            <stop offset="1" stopColor="#5cc4f2" />
          </linearGradient>
          <linearGradient id="leaf" x1="0" y1="1" x2="1" y2="0">
            <stop offset="0" stopColor="#e9e04e" />
            <stop offset="0.500" stopColor="#58bd6c" />
            <stop offset="1" stopColor="#6bc98a" />
          </linearGradient>
        </defs>
        <path d="M43 1C24-1 2 9 1 24c0 6 4 9 8 10-3-6-1-11 5-15C22 13 30 5 43 1z" fill="url(#swirl)" />
        <path d="M10 31c5 0 12-3 14-8 1-3-2-5-6-3 5-5 13-5 15-1 4 9-9 17-19 15z" fill="#5a9dd6" />
        <path d="M4 39c10 0 22-4 25-13 1-5-3-9-9-8 8-5 18-4 20 2 3 10-15 20-36 19z" fill="url(#leaf)" />
      </svg>
      <div className="flex w-[106px] flex-col pb-0.5 whitespace-nowrap">
        <span className="text-[21px] leading-6 font-bold text-[#5b9bd5]">极光下载站</span>
        <span className="font-[Liberation_Sans,sans-serif] text-base leading-4 font-bold text-[#62c27c]">www.xz7.com</span>
      </div>
    </div>
  );
}

export default function App() {
  return (
    <div className="relative flex h-screen flex-col overflow-hidden bg-[#f5f7f9] font-[Noto_Sans,Noto_Sans_CJK_SC,sans-serif] text-xs whitespace-nowrap text-[#222b3c]">
      <TitleBar />
      <MenuBar />
      <Ribbon />
      <main className="flex min-h-0 flex-1">
        <div className="min-w-0 flex-1 overflow-hidden">
          <DocumentPage />
        </div>
        <ScrollBar />
        <SideBar />
      </main>
      <StatusBar />
      <Arrow className="top-[131px] left-[150px]" tilt="steep" />
      <Arrow className="top-[417px] left-[554px]" tilt="flat" />
      <svg width="14" height="57" viewBox="0 0 14 57" className="absolute top-[652px] -right-px z-20" aria-hidden="true">
        <rect x="4" y="1" width="6" height="48" rx="3" fill="#5f7685" stroke="#3d4e59" />
        <circle cx="7" cy="50" r="5.500" fill="#db7010" stroke="#4c606d" strokeWidth="1.500" />
        <path d="M7 17v30" stroke="#d9532c" strokeWidth="2" />
      </svg>
      <NetworkWidget />
      <Watermark />
    </div>
  );
}
